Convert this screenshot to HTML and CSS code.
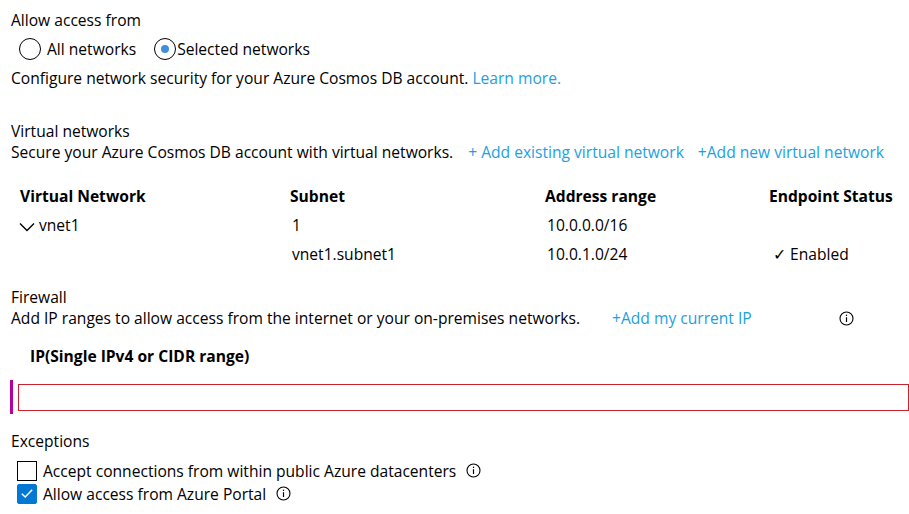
FILE: index.html
```html
<!DOCTYPE html>
<html>
<head>
<meta charset="utf-8">
<link rel="stylesheet" href="styles.css">
</head>
<body>
<div class="page">
  <div class="label l-allow">Allow access from</div>
  <div class="radios">
    <label class="radio"><span class="circle"></span><span class="rtext">All networks</span></label>
    <label class="radio sel"><span class="circle"><span class="dot"></span></span><span class="rtext">Selected networks</span></label>
  </div>
  <div class="line l-config">Configure network security for your Azure Cosmos DB account. <a class="link">Learn more.</a></div>

  <div class="label l-vnet">Virtual networks</div>
  <div class="line l-secure"><span>Secure your Azure Cosmos DB account with virtual networks.</span><a class="link add1">+ Add existing virtual network</a><a class="link add2">+Add new virtual network</a></div>

  <div class="table">
    <div class="th c1">Virtual Network</div>
    <div class="th c2">Subnet</div>
    <div class="th c3">Address range</div>
    <div class="th c4">Endpoint Status</div>

    <div class="td c1 vn"><svg class="chev" width="16" height="10" viewBox="0 0 16 10"><path d="M1 1.5 L8 8.5 L15 1.5" fill="none" stroke="#000" stroke-width="1.4"/></svg>vnet1</div>
    <div class="td c2">1</div>
    <div class="td c3">10.0.0.0/16</div>
    <div class="td c4"></div>

    <div class="td c1"></div>
    <div class="td c2">vnet1.subnet1</div>
    <div class="td c3">10.0.1.0/24</div>
    <div class="td c4 en">✓ Enabled</div>
  </div>

  <div class="label l-fw">Firewall</div>
  <div class="line l-addip"><span>Add IP ranges to allow access from the internet or your on-premises networks.</span><a class="link add3">+Add my current IP</a><span class="info big"><svg width="15" height="15" viewBox="0 0 15 15"><circle cx="7.5" cy="7.5" r="6.5" fill="none" stroke="#000" stroke-width="1.1"/><rect x="6.9" y="6.2" width="1.2" height="4.8" fill="#000"/><rect x="6.9" y="3.7" width="1.2" height="1.3" fill="#000"/></svg></span></div>

  <div class="iplabel">IP(Single IPv4 or CIDR range)</div>
  <div class="iprow">
    <span class="bar"></span>
    <div class="ipinput"></div>
  </div>

  <div class="label l-exc">Exceptions</div>
  <div class="check">
    <span class="box"></span>
    <span class="ctext">Accept connections from within public Azure datacenters</span>
    <span class="info"><svg width="15" height="15" viewBox="0 0 15 15"><circle cx="7.5" cy="7.5" r="6.5" fill="none" stroke="#000" stroke-width="1.1"/><rect x="6.9" y="6.2" width="1.2" height="4.8" fill="#000"/><rect x="6.9" y="3.7" width="1.2" height="1.3" fill="#000"/></svg></span>
  </div>
  <div class="check c2row">
    <span class="box on"><svg width="19" height="19" viewBox="0 0 19 19"><path d="M4 9.8 L7.6 13.2 L15 5.6" fill="none" stroke="#fff" stroke-width="1.6"/></svg></span>
    <span class="ctext">Allow access from Azure Portal</span>
    <span class="info"><svg width="15" height="15" viewBox="0 0 15 15"><circle cx="7.5" cy="7.5" r="6.5" fill="none" stroke="#000" stroke-width="1.1"/><rect x="6.9" y="6.2" width="1.2" height="4.8" fill="#000"/><rect x="6.9" y="3.7" width="1.2" height="1.3" fill="#000"/></svg></span>
  </div>
</div>
</body>
</html>
```

FILE: styles.css
```css
html, body {
  margin: 0;
  padding: 0;
  background: #fff;
}
body {
  font-family: "Open Sans", "Noto Sans", "Liberation Sans", sans-serif;
  font-size: 15.6px;
  color: #000;
  width: 909px;
  height: 514px;
  overflow: hidden;
}
.page {
  padding: 10px 0 0 11px;
  width: 898px;
}
.label, .line {
  line-height: 21px;
  white-space: nowrap;
}
.link {
  color: #1ba1e2;
  text-decoration: none;
}
.radios {
  display: flex;
  align-items: center;
  margin-top: 6px;
  padding-left: 8px;
  height: 24px;
}
.radio {
  display: flex;
  align-items: center;
}
.circle {
  width: 20px;
  height: 20px;
  border: 1px solid #000;
  border-radius: 50%;
  display: flex;
  align-items: center;
  justify-content: center;
  box-sizing: content-box;
}
.dot {
  width: 8px;
  height: 8px;
  border-radius: 50%;
  background: #3f8fdd;
}
.radio .rtext {
  margin-left: 6px;
}
.radio.sel {
  margin-left: 18px;
}
.radio.sel .rtext {
  margin-left: 1px;
}
.l-config {
  margin-top: 7px;
}
.l-vnet {
  margin-top: 32px;
}
.l-secure {
  display: flex;
}
.add1 {
  margin-left: 15px;
}
.add2 {
  margin-left: 14px;
}
.table {
  display: grid;
  grid-template-columns: 270px 255px 224px 140px;
  margin-top: 23px;
  margin-left: 9px;
  grid-auto-rows: 29px;
}
.th {
  font-weight: 700;
  line-height: 21px;
  white-space: nowrap;
}
.td {
  line-height: 21px;
  white-space: nowrap;
}
.td.c2, .td.c3 {
  padding-left: 2px;
}
.td.en {
  padding-left: 4px;
}
.vn {
  display: flex;
  align-items: center;
  height: 21px;
}
.chev {
  margin-right: 4px;
  margin-left: -1px;
  margin-top: 3px;
}
.l-fw {
  margin-top: 14px;
}
.l-addip {
  display: flex;
  align-items: center;
}
.add3 {
  margin-left: 32px;
}
.info {
  display: inline-flex;
  align-items: center;
}
.info.big {
  margin-left: 87px;
}
.iplabel {
  font-weight: 700;
  margin-top: 17px;
  margin-left: 19px;
  line-height: 21px;
}
.iprow {
  display: flex;
  align-items: center;
  margin-top: 13px;
  margin-left: -1px;
  height: 34px;
}
.bar {
  width: 3px;
  height: 34px;
  background: #b4009e;
}
.ipinput {
  margin-left: 5px;
  flex: 1;
  height: 25px;
  border: 1px solid #c8232c;
  margin-right: 0;
}
.l-exc {
  margin-top: 17px;
}
.check {
  display: flex;
  align-items: center;
  margin-left: 6px;
  height: 23px;
  margin-top: 7px;
}
.check.c2row {
  margin-top: 0;
}
.box {
  width: 18px;
  height: 18px;
  border: 1px solid #000;
  display: flex;
  align-items: center;
  justify-content: center;
}
.box.on {
  background: #0078d4;
  border-color: #0078d4;
  border-radius: 2px;
}
.ctext {
  margin-left: 6px;
  white-space: nowrap;
}
.check .info {
  margin-left: 10px;
}
```
